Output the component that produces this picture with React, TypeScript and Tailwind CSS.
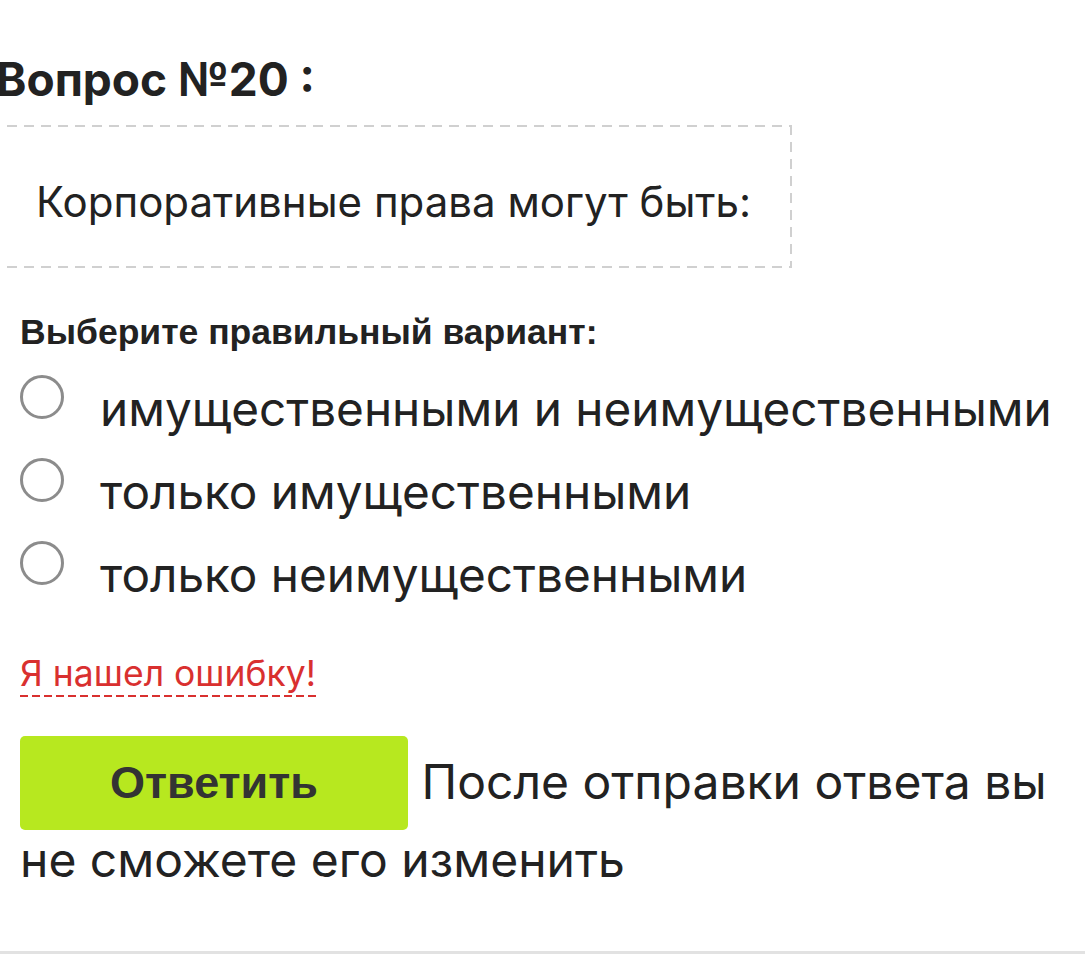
const options = [
  "имущественными и неимущественными",
  "только имущественными",
  "только неимущественными",
];

function Radio() {
  return (
    <span className="mt-[7px] block h-[44px] w-[44px] shrink-0 rounded-full border-[3px] border-[#8c8c8c]" />
  );
}

export default function App() {
  return (
    <div className="h-[954px] w-[1085px] overflow-hidden border-b-[3px] border-[#e2e2e2] bg-white font-['Inter','Noto_Sans',sans-serif] text-[#222]">
      <div className="px-[20px]">
        <h1 className="-ml-[24px] pt-[56px] text-[46px] font-bold leading-[46px]">
          Вопрос №20 :
        </h1>

        {/* dashed frame drawn with gradients to get long dashes */}
        <div className="-ml-[30px] mt-[23px] flex h-[143px] w-[802px] items-center bg-no-repeat pl-[46px] pt-[10px] [background-image:repeating-linear-gradient(90deg,#d0d0d0_0_10px,transparent_10px_17px),repeating-linear-gradient(90deg,#d0d0d0_0_10px,transparent_10px_17px),repeating-linear-gradient(180deg,#d0d0d0_0_10px,transparent_10px_17px)] [background-position:0_0,0_100%,100%_0] [background-size:100%_2px,100%_2px,2px_100%]">
          <p className="text-[42px] leading-none">Корпоративные права могут быть:</p>
        </div>

        <h3 className="mt-[47px] font-['Liberation_Sans',Arial,sans-serif] text-[35.5px] font-bold leading-[35.5px]">
          Выберите правильный вариант:
        </h3>

        <ul className="mt-[17px]">
          {options.map((option) => (
            <li key={option} className="flex h-[83px] gap-[36px]">
              <Radio />
              <span className="text-[47.7px] leading-[83px]">{option}</span>
            </li>
          ))}
        </ul>

        <div className="mt-[40px]">
          <span className="inline-block bg-no-repeat pb-[6px] text-[35.5px] leading-[34px] text-[#d9302f] [background-image:repeating-linear-gradient(90deg,#d9302f_0_8px,transparent_8px_12px)] [background-position:0_100%] [background-size:100%_2px]">
            Я нашел ошибку!
          </span>
        </div>

        <p className="mt-[39px] text-[48px] leading-[60px]">
          <button className="inline-flex h-[94px] w-[388px] items-center justify-center rounded-[5px] bg-[#b7e81f] font-['Liberation_Sans',Arial,sans-serif] text-[45px] font-bold leading-[45px] text-[#333]">
            Ответить
          </button>{" "}
          После отправки ответа вы не сможете его изменить
        </p>
      </div>
    </div>
  );
}
